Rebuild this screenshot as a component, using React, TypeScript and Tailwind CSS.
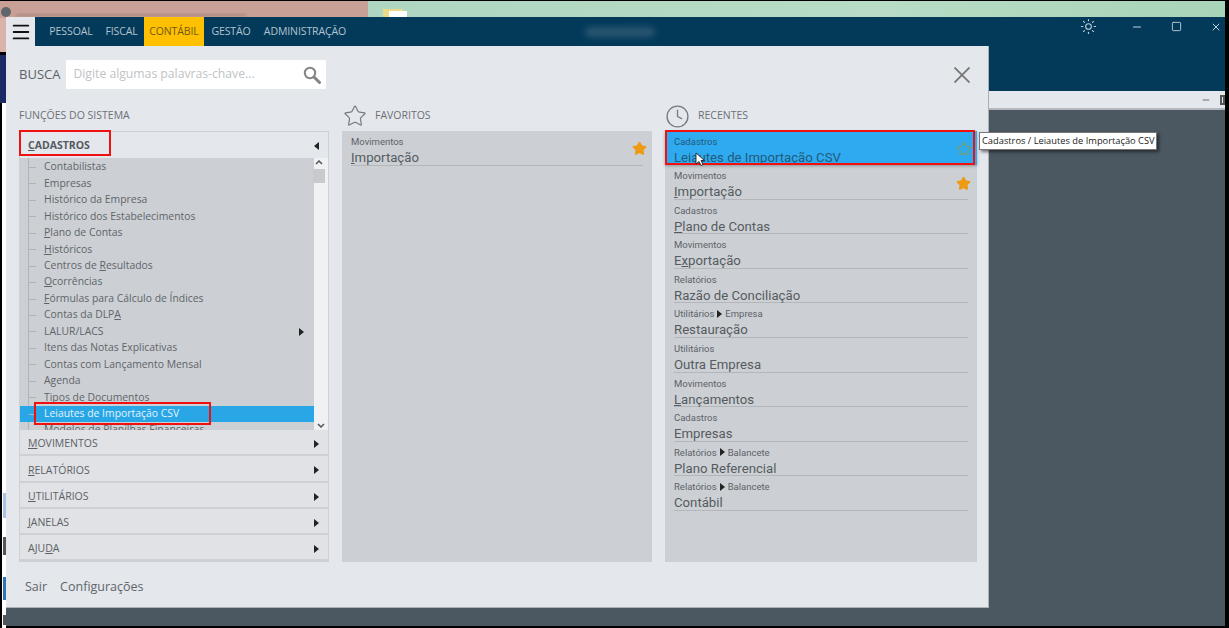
import { Clock, Menu, Minus, Square, Star, Sun, X } from "lucide-react";

const cadastros = [
  { pre: "", key: "", rest: "Contabilistas" },
  { pre: "", key: "", rest: "Empresas" },
  { pre: "", key: "", rest: "Histórico da Empresa" },
  { pre: "", key: "", rest: "Histórico dos Estabelecimentos" },
  { pre: "", key: "P", rest: "lano de Contas" },
  { pre: "", key: "H", rest: "istóricos" },
  { pre: "Centros de ", key: "R", rest: "esultados" },
  { pre: "", key: "O", rest: "corrências" },
  { pre: "", key: "F", rest: "órmulas para Cálculo de Índices" },
  { pre: "Contas da DLP", key: "A", rest: "" },
  { pre: "", key: "", rest: "LALUR/LACS", more: true },
  { pre: "", key: "", rest: "Itens das Notas Explicativas" },
  { pre: "", key: "", rest: "Contas com Lançamento Mensal" },
  { pre: "", key: "", rest: "Agenda" },
  { pre: "", key: "", rest: "Tipos de Documentos" },
  { pre: "", key: "", rest: "Leiautes de Importação CSV", active: true },
  { pre: "", key: "", rest: "Modelos de Planilhas Financeiras" },
];

const sections = [
  { key: "M", rest: "OVIMENTOS" },
  { key: "R", rest: "ELATÓRIOS" },
  { key: "U", rest: "TILITÁRIOS" },
  { key: "J", rest: "ANELAS" },
  { pre: "AJU", key: "D", rest: "A" },
];

const recentes = [
  { path: ["Movimentos"], key: "I", rest: "mportação", fav: true },
  { path: ["Cadastros"], key: "P", rest: "lano de Contas" },
  { path: ["Movimentos"], pre: "E", key: "x", rest: "portação" },
  { path: ["Relatórios"], key: "", rest: "Razão de Conciliação" },
  { path: ["Utilitários", "Empresa"], key: "", rest: "Restauração" },
  { path: ["Utilitários"], key: "", rest: "Outra Empresa" },
  { path: ["Movimentos"], key: "L", rest: "ançamentos" },
  { path: ["Cadastros"], key: "", rest: "Empresas" },
  { path: ["Relatórios", "Balancete"], key: "", rest: "Plano Referencial" },
  { path: ["Relatórios", "Balancete"], key: "", rest: "Contábil" },
];

function Caret({ left = false }: { left?: boolean }) {
  return (
    <svg viewBox="0 0 5 8" className="h-2 w-[5px] shrink-0 fill-[#222]">
      <path d={left ? "M5 0v8L0 4z" : "M0 0v8l5-4z"} />
    </svg>
  );
}

function RecentRow({ path, pre, keyLetter, rest, fav }: { path: string[]; pre?: string; keyLetter: string; rest: string; fav?: boolean }) {
  return (
    <div className="relative h-[34.6px] px-[9px] pt-[5px]">
      <div className="flex h-[11px] items-center gap-[3px] font-['Roboto',sans-serif] text-[9.5px] leading-[11px] text-[#5c6268]">
        {path[0]}
        {path[1] && <Caret />}
        {path[1]}
      </div>
      <div className="h-[18.6px] border-b border-[#b3b7bb] font-['Roboto',sans-serif] text-[13.2px] leading-[21px] text-[#565b60]">
        {pre}
        <u>{keyLetter}</u>
        {rest}
      </div>
      {fav && <Star className="absolute right-[6px] top-[11px] h-[15px] w-[15px] fill-[#ee9a12] text-[#ee9a12]" />}
    </div>
  );
}

export default function App() {
  return (
    <div className="relative h-[628px] w-[1229px] overflow-hidden bg-black font-['Open_Sans',sans-serif]">
      {/* desktop behind the window */}
      <div className="absolute left-0 top-[1px] flex h-[17px] w-[1225px]">
        <div className="relative w-[368px] bg-[#c9a096]">
          <div className="absolute left-[1px] top-[6px] h-[10px] w-[10px] rounded-full bg-[#5f666c]" />
          <div className="absolute left-[16px] top-[13px] h-[2px] w-[230px] bg-[#a98a80] blur-[1px]" />
        </div>
        <div className="relative flex-1 bg-[linear-gradient(90deg,#aed6c0,#b8dcc6_60%,#a8d4b8)]">
          <div className="absolute left-[15px] top-[8px] h-[8px] w-[20px] bg-[#ecd98a]" />
          <div className="absolute left-[21px] top-[10px] h-[6px] w-[18px] bg-white" />
        </div>
      </div>
      <div className="absolute left-0 top-[18px] h-[34px] w-[6px] bg-[#d9b3aa]" />
      <div className="absolute left-0 top-[55px] h-[48px] w-[6px] bg-[#1c2b66]" />
      <div className="absolute left-[2px] top-[103px] h-[525px] w-[4px] bg-white" />
      <div className="absolute left-[3px] top-[493px] h-[25px] w-[3px] bg-[#a9c4e0]" />
      <div className="absolute left-[3px] top-[537px] h-[18px] w-[3px] bg-[#555]" />
      <div className="absolute left-[3px] top-[577px] h-[23px] w-[3px] bg-[#2f74b8]" />
      <div className="absolute left-[3px] top-[615px] h-[10px] w-[3px] bg-[#555]" />

      {/* main window */}
      <div className="absolute left-[6px] top-[17px] flex h-[609px] w-[1219px] flex-col bg-[#4b5862]">
        <div className="flex h-[74px] items-start bg-[#033a5a]">
          <div className="flex h-[29px] w-[29px] items-center justify-center bg-[#e4e7ec]">
            <Menu className="h-[22px] w-[22px] text-[#111]" strokeWidth={2} />
          </div>
          <nav className="ml-px flex h-[29px] items-center text-[10.5px] tracking-[-0.1px] text-[#b4c3ce]">
            <span className="flex h-full w-[67px] items-center justify-center pl-[3px]">PESSOAL</span>
            <span className="flex h-full w-[41px] items-center justify-center pr-[4px]">FISCAL</span>
            <span className="flex h-full w-[60px] items-center justify-center bg-[#ffc000] text-[#6f5a14]">CONTÁBIL</span>
            <span className="flex h-full w-[54px] items-center justify-center">GESTÃO</span>
            <span className="flex h-full w-[94px] items-center justify-center">ADMINISTRAÇÃO</span>
          </nav>
          <div className="ml-auto flex h-[19px] items-center pr-[3px] text-[#c2d0da]">
            <Sun className="mr-[34px] h-[17px] w-[17px]" strokeWidth={1.5} />
            <Minus className="mr-[28px] h-[12px] w-[12px]" strokeWidth={2} />
            <Square className="mr-[28px] h-[11px] w-[11px]" strokeWidth={2} />
            <X className="h-[12px] w-[12px]" strokeWidth={2} />
          </div>
        </div>
        <div className="flex h-[19px] items-center justify-end border-b-2 border-[#b4b8bc] bg-[#e4e7ec] pr-[14px]">
          <Minus className="h-[10px] w-[10px] text-[#555]" strokeWidth={2} />
        </div>
      </div>
      <div className="absolute left-[585px] top-[27px] h-[10px] w-[70px] rounded-full bg-[#2a5672] blur-[3px]" />
      <div className="absolute left-[1220px] top-[95px] h-[10px] w-[5px] border-2 border-[#555]" />

      {/* menu overlay */}
      <div className="absolute left-[6px] top-[46px] flex h-[562px] w-[983px] flex-col border-b border-r border-[#aab0b6] bg-[#e4e7ec] pl-[13px] pr-[12px]">
        <div className="flex h-[57px] items-center">
          <span className="text-[13px] text-[#5d6166]">BUSCA</span>
          <div className="ml-[6px] flex h-[29px] w-[260px] items-center justify-between bg-white pl-[7px] pr-[5px]">
            <span className="text-[12.2px] text-[#c0c3c6]">Digite algumas palavras-chave...</span>
            <svg viewBox="0 0 18 18" className="h-[18px] w-[18px] fill-none stroke-[#848484]">
              <circle cx="7" cy="7" r="5.2" strokeWidth="2" />
              <path d="M11 11l5.5 5.5" strokeWidth="3" strokeLinecap="round" />
            </svg>
          </div>
          <svg viewBox="0 0 16 16" className="ml-auto mr-[6px] h-[16px] w-[16px] fill-none stroke-[#777] stroke-[1.8]">
            <path d="M0.5 0.5l15 15M15.5 0.5l-15 15" />
          </svg>
        </div>

        <div className="flex h-[459px]">
          {/* funções */}
          <div className="flex w-[310px] shrink-0 flex-col">
            <div className="flex h-[28px] items-center pb-[2px] text-[10.5px] text-[#6c7075]">FUNÇÕES DO SISTEMA</div>
            <div className="flex h-[431px] flex-col border border-[#cdd0d4]">
              <div className="flex h-[26px] shrink-0 items-center justify-between pl-[8px] pr-[9px] pt-[2px] text-[10.5px] font-bold text-[#555a5f]">
                <span>
                  <u>C</u>ADASTROS
                </span>
                <Caret left />
              </div>
              <div className="flex h-[272px] shrink-0 overflow-hidden">
                <div className="relative h-full w-[295px] overflow-hidden bg-[#ccd0d4] pt-px">
                  <div className="absolute left-[8px] top-0 h-full w-px bg-[#b0b4b8]" />
                  {cadastros.map((c) => (
                    <div
                      key={c.pre + c.key + c.rest}
                      className={`relative flex h-[16.45px] items-center justify-between pl-[24px] pr-[10px] text-[10.4px] ${c.active ? "bg-[#29a6e6] text-[#e4f4fc]" : "text-[#5f6469]"}`}
                    >
                      <span className="absolute left-[9px] top-[8px] h-px w-[7px] bg-[#b0b4b8]" />
                      <span>
                        {c.pre}
                        <u>{c.key}</u>
                        {c.rest}
                      </span>
                      {c.more && <Caret />}
                    </div>
                  ))}
                </div>
                <div className="relative flex w-[14px] flex-col items-center justify-between bg-[#f0f1f3] py-[2px]">
                  <div>
                    <svg viewBox="0 0 8 5" className="h-[5px] w-[8px] fill-none stroke-[#555] stroke-[1.5]">
                      <path d="M1 4l3-3 3 3" />
                    </svg>
                    <div className="mt-[4px] h-[14px] w-[12px] -translate-x-[2px] bg-[#c8cacd]" />
                  </div>
                  <svg viewBox="0 0 8 5" className="h-[5px] w-[8px] fill-none stroke-[#555] stroke-[1.5]">
                    <path d="M1 1l3 3 3-3" />
                  </svg>
                </div>
              </div>
              {sections.map((s) => (
                <div
                  key={s.key}
                  className="flex h-[26.3px] shrink-0 items-center justify-between border-b-2 border-[#cdd0d4] bg-[#e0e2e5] pl-[8px] pr-[9px] pt-[4px] text-[10.5px] text-[#5c6166]"
                >
                  <span>
                    {s.pre}
                    <u>{s.key}</u>
                    {s.rest}
                  </span>
                  <Caret />
                </div>
              ))}
            </div>
          </div>

          {/* favoritos */}
          <div className="ml-[13px] flex w-[310px] shrink-0 flex-col">
            <div className="flex h-[28px] items-center pb-[2px] text-[10.5px] text-[#6c7075]">
              <Star className="ml-[1px] mr-[8px] h-[24px] w-[24px] text-[#777c81]" strokeWidth={1.2} />
              FAVORITOS
            </div>
            <div className="h-[431px] bg-[#ccd0d4]">
              <div className="relative h-[34.6px] px-[9px] pt-[5px]">
                <div className="h-[11px] font-['Roboto',sans-serif] text-[9.5px] leading-[11px] text-[#5c6268]">Movimentos</div>
                <div className="h-[18.6px] border-b border-[#b3b7bb] font-['Roboto',sans-serif] text-[13.2px] leading-[21px] text-[#565b60]">
                  <u>I</u>mportação
                </div>
                <Star className="absolute right-[5px] top-[10px] h-[15px] w-[15px] fill-[#ee9a12] text-[#ee9a12]" />
              </div>
            </div>
          </div>

          {/* recentes */}
          <div className="ml-[13px] flex w-[312px] shrink-0 flex-col">
            <div className="flex h-[28px] items-center pb-[2px] text-[10.5px] text-[#6c7075]">
              <Clock className="mr-[8px] h-[25px] w-[25px] text-[#777c81]" strokeWidth={1.3} />
              RECENTES
            </div>
            <div className="h-[431px] bg-[#ccd0d4]">
              <div className="relative h-[34px] bg-[#2eaaf0] px-[9px] pt-[5px] text-[#235a7a] shadow-[0_1px_3px_rgba(0,0,0,0.3)]">
                <div className="h-[11px] font-['Roboto',sans-serif] text-[9.5px] leading-[11px]">Cadastros</div>
                <div className="font-['Roboto',sans-serif] text-[13.2px] leading-[21px]">Leiautes de Importação CSV</div>
                <Star className="absolute right-[5px] top-[10px] h-[16px] w-[16px] text-[#8e9a45]" strokeWidth={1.5} />
              </div>
              {recentes.map((r) => (
                <RecentRow key={r.key + r.rest} path={r.path} pre={r.pre} keyLetter={r.key} rest={r.rest} fav={r.fav} />
              ))}
            </div>
          </div>
        </div>

        <div className="flex flex-1 items-center gap-[13px] pl-[6px] pt-[5px] text-[12.5px] text-[#60656a]">
          <span>Sair</span>
          <span>Configurações</span>
        </div>
      </div>

      {/* annotations */}
      <div className="absolute left-[19px] top-[130px] h-[26px] w-[92px] border-2 border-[#f01010]" />
      <div className="absolute left-[34px] top-[402px] h-[23px] w-[177px] border-2 border-[#f01010]" />
      <div className="absolute left-[665px] top-[130px] h-[35px] w-[310px] border-2 border-[#f01010]" />

      {/* tooltip */}
      <div className="absolute left-[979px] top-[132px] flex h-[18px] w-[178px] items-center whitespace-nowrap border border-[#777] bg-white pl-[2px] text-[9.3px] text-[#222] shadow-[2px_2px_3px_rgba(0,0,0,0.5)]">
        Cadastros / Leiautes de Importação CSV
      </div>

      {/* mouse cursor */}
      <svg viewBox="0 0 10 15" className="absolute left-[695px] top-[152px] h-[15px] w-[10px]">
        <path d="M1 1v11l3-2.5 2 4 2-1-2-4h3.5z" fill="#fff" stroke="#111" strokeWidth="0.8" />
      </svg>
    </div>
  );
}
